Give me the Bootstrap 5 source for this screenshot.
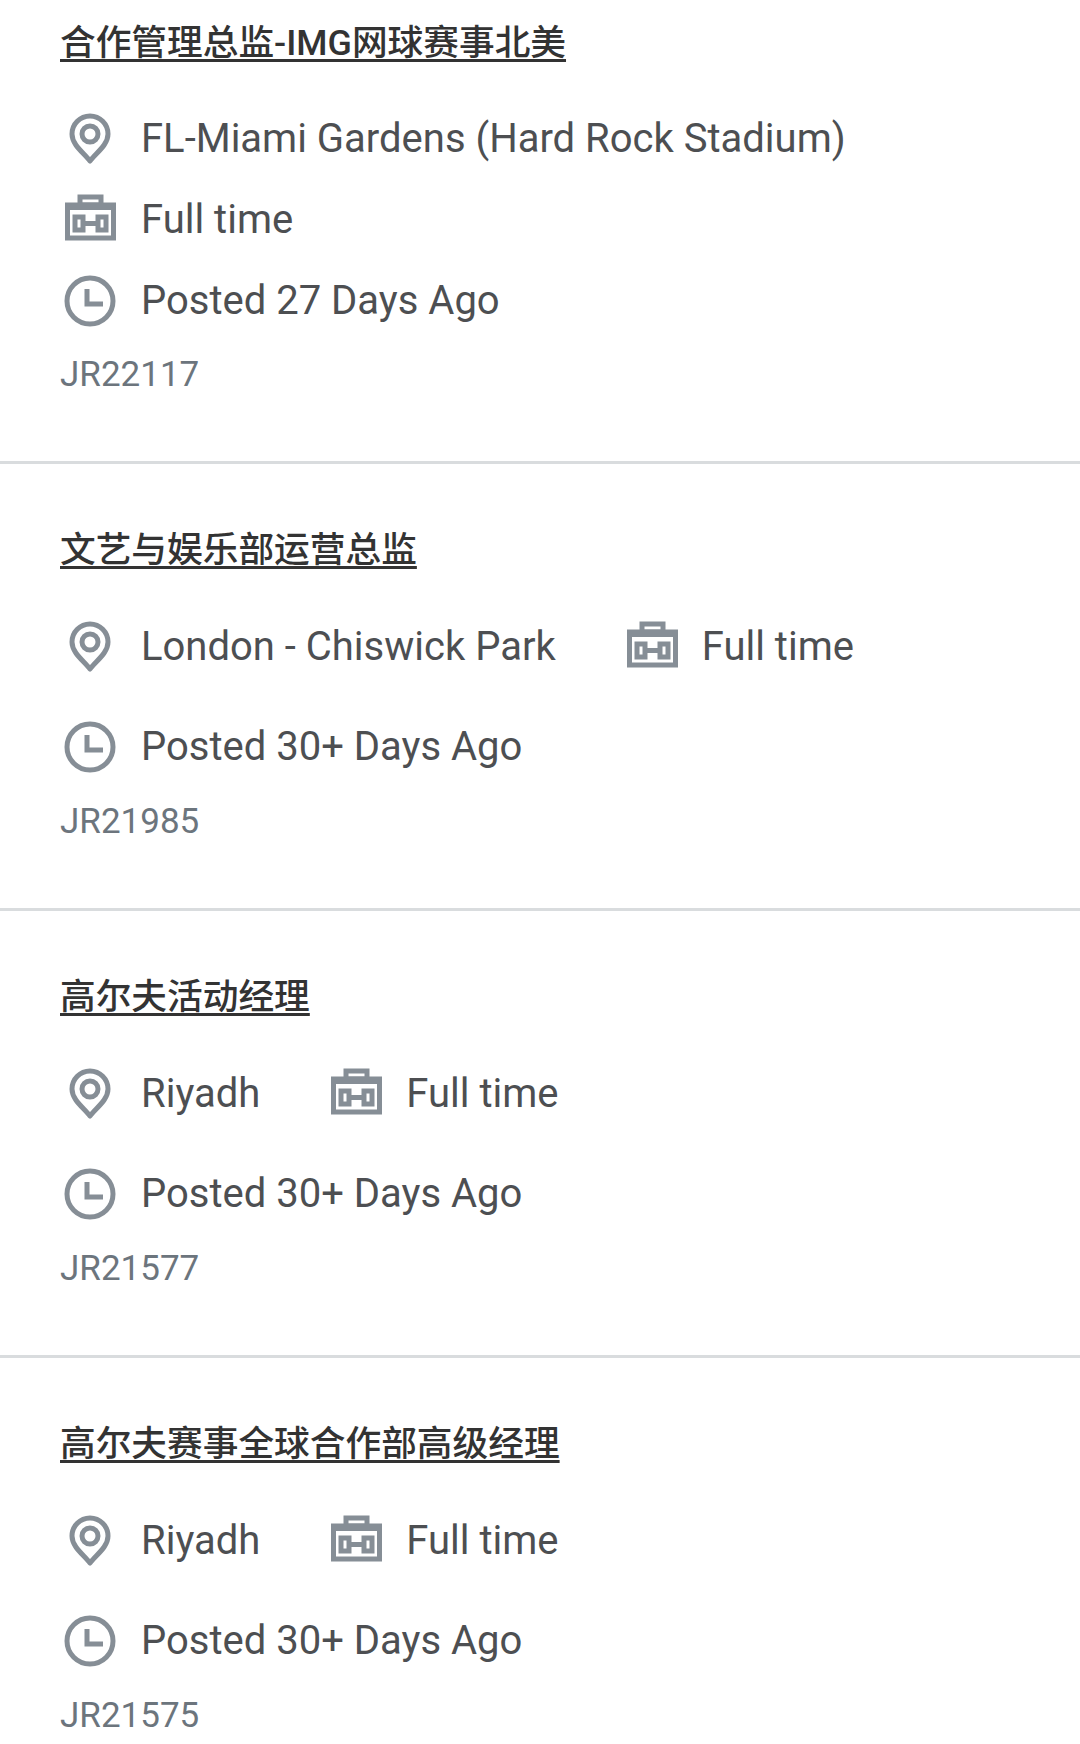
<!DOCTYPE html>
<html lang="zh-CN">
<head>
    <meta charset="UTF-8">
    <meta name="viewport" content="width=device-width, initial-scale=1.0">
    <title>Jobs</title>
    <link href="https://cdn.jsdelivr.net/npm/bootstrap@5.3.1/dist/css/bootstrap.min.css" rel="stylesheet">
    <script src="https://cdn.jsdelivr.net/npm/bootstrap@5.3.1/dist/js/bootstrap.bundle.min.js"></script>
    <style>
        body { font-family: Roboto, "Noto Sans CJK SC", sans-serif; background: #fff; overflow: hidden; }
        .list-group-flush > .job-item { padding: 65px 60px 65px; border-width: 0 0 3px; border-style: solid; border-color: #d9dcde; }
        .list-group-flush > .job-item:first-child { padding-top: 22px; padding-bottom: 65px; }
        .list-group-flush > .job-item:last-child { border-bottom: 0; padding-bottom: 0; }
        .job-title { display: block; font-size: 35.7px; font-weight: 500; line-height: 42px; color: #333; text-decoration-thickness: 2.5px; text-underline-offset: 4px; margin-bottom: 26px; }
        .job-meta { column-gap: 66px; }
        .job-meta-row { height: 100px; font-size: 40px; color: #4d4f52; }
        .job-stack { padding: 8px 0 9px; }
        .job-stack .job-meta-row { height: 81px; }
        .job-meta-row svg { width: 60px; height: 60px; margin-right: 21px; flex: none; }
        .job-meta .job-meta-row + .job-meta-row svg { margin-right: 20px; }
        .job-ref { font-size: 35px; line-height: 42px; color: #6c757d; margin-top: 4px; }
        .icon-stroke { fill: none; stroke: #868e96; stroke-width: 5; }
    </style>
</head>
<body>
    <svg width="0" height="0" class="position-absolute">
        <symbol id="i-pin" viewBox="0 0 60 60">
            <path class="icon-stroke" stroke-linejoin="round" d="M30 52 C24 44 12 36 12 25 A18 18 0 0 1 48 25 C48 36 36 44 30 52 Z"/>
            <circle class="icon-stroke" cx="30" cy="25" r="8"/>
        </symbol>
        <symbol id="i-case" viewBox="0 0 60 60">
            <rect class="icon-stroke" x="20" y="7" width="21" height="8"/>
            <rect class="icon-stroke" x="7.5" y="15" width="46" height="33"/>
            <rect x="5" y="13" width="51" height="7" fill="#868e96"/>
            <rect class="icon-stroke" x="15" y="27" width="8" height="13"/>
            <rect class="icon-stroke" x="38" y="27" width="8" height="13"/>
            <path class="icon-stroke" d="M23 33.5 H38"/>
        </symbol>
        <symbol id="i-clock" viewBox="0 0 60 60">
            <circle class="icon-stroke" cx="30" cy="30" r="23"/>
            <path class="icon-stroke" d="M27 18 V33 H43"/>
        </symbol>
    </svg>

    <div class="list-group list-group-flush">
        <div class="list-group-item job-item">
            <a href="#" class="job-title">合作管理总监-IMG网球赛事北美</a>
            <div class="job-stack">
                <div class="job-meta-row d-flex align-items-center"><svg><use href="#i-pin"/></svg>FL-Miami Gardens (Hard Rock Stadium)</div>
                <div class="job-meta-row d-flex align-items-center"><svg><use href="#i-case"/></svg>Full time</div>
                <div class="job-meta-row d-flex align-items-center"><svg><use href="#i-clock"/></svg>Posted 27 Days Ago</div>
            </div>
            <div class="job-ref">JR22117</div>
        </div>
        <div class="list-group-item job-item">
            <a href="#" class="job-title">文艺与娱乐部运营总监</a>
            <div class="job-meta d-flex flex-wrap">
                <div class="job-meta-row d-flex align-items-center"><svg><use href="#i-pin"/></svg>London - Chiswick Park</div>
                <div class="job-meta-row d-flex align-items-center"><svg><use href="#i-case"/></svg>Full time</div>
            </div>
            <div class="job-meta-row d-flex align-items-center"><svg><use href="#i-clock"/></svg>Posted 30+ Days Ago</div>
            <div class="job-ref">JR21985</div>
        </div>
        <div class="list-group-item job-item">
            <a href="#" class="job-title">高尔夫活动经理</a>
            <div class="job-meta d-flex flex-wrap">
                <div class="job-meta-row d-flex align-items-center"><svg><use href="#i-pin"/></svg>Riyadh</div>
                <div class="job-meta-row d-flex align-items-center"><svg><use href="#i-case"/></svg>Full time</div>
            </div>
            <div class="job-meta-row d-flex align-items-center"><svg><use href="#i-clock"/></svg>Posted 30+ Days Ago</div>
            <div class="job-ref">JR21577</div>
        </div>
        <div class="list-group-item job-item">
            <a href="#" class="job-title">高尔夫赛事全球合作部高级经理</a>
            <div class="job-meta d-flex flex-wrap">
                <div class="job-meta-row d-flex align-items-center"><svg><use href="#i-pin"/></svg>Riyadh</div>
                <div class="job-meta-row d-flex align-items-center"><svg><use href="#i-case"/></svg>Full time</div>
            </div>
            <div class="job-meta-row d-flex align-items-center"><svg><use href="#i-clock"/></svg>Posted 30+ Days Ago</div>
            <div class="job-ref">JR21575</div>
        </div>
    </div>
</body>
</html>
